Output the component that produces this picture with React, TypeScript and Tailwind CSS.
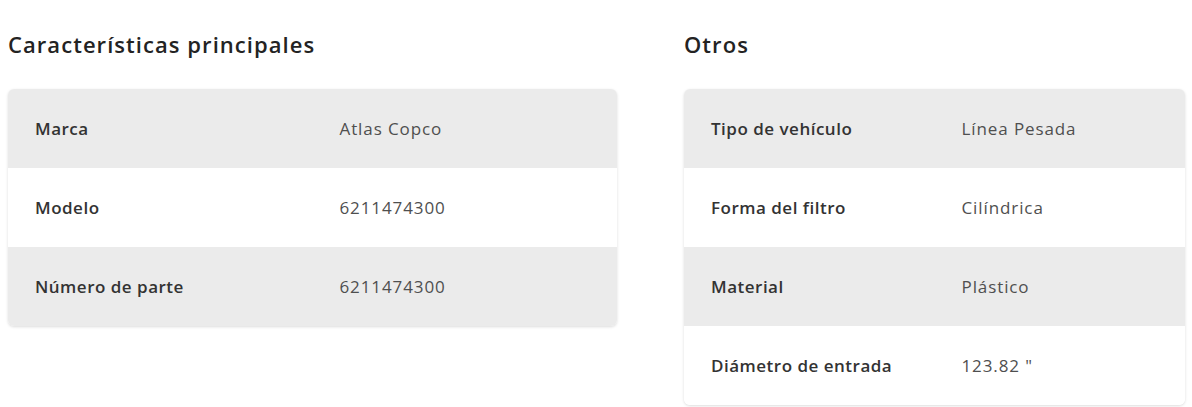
const principales = [
  { label: 'Marca', value: 'Atlas Copco' },
  { label: 'Modelo', value: '6211474300' },
  { label: 'Número de parte', value: '6211474300' },
];

const otros = [
  { label: 'Tipo de vehículo', value: 'Línea Pesada' },
  { label: 'Forma del filtro', value: 'Cilíndrica' },
  { label: 'Material', value: 'Plástico' },
  { label: 'Diámetro de entrada', value: '123.82 "' },
];

const SpecTable = ({ title, rows }: { title: string; rows: { label: string; value: string }[] }) => (
  <section>
    <h2 className="h-[89px] flex items-center pb-[1px] text-[22px] font-semibold tracking-[1.05px] text-[#232323]">{title}</h2>
    <div className="rounded-[6px] overflow-hidden shadow-[0_1px_3px_rgba(0,0,0,0.14)]">
      {rows.map((row, i) => (
        <div
          key={row.label}
          className={`grid grid-cols-2 h-[79px] items-center text-[17px] ${i % 2 === 0 ? 'bg-[#ebebeb]' : 'bg-white'}`}
        >
          <span className="px-[27px] font-semibold tracking-[0.5px] text-[#333]">{row.label}</span>
          <span className="px-[27px] tracking-[0.9px] text-[#4f4f4f]">{row.value}</span>
        </div>
      ))}
    </div>
  </section>
);

export default function App() {
  return (
    <div className="bg-white min-h-screen px-[8px] font-['Open_Sans',sans-serif]">
      <div className="grid grid-cols-[609px_501px] gap-[67px]">
        <SpecTable title="Características principales" rows={principales} />
        <SpecTable title="Otros" rows={otros} />
      </div>
    </div>
  );
}
